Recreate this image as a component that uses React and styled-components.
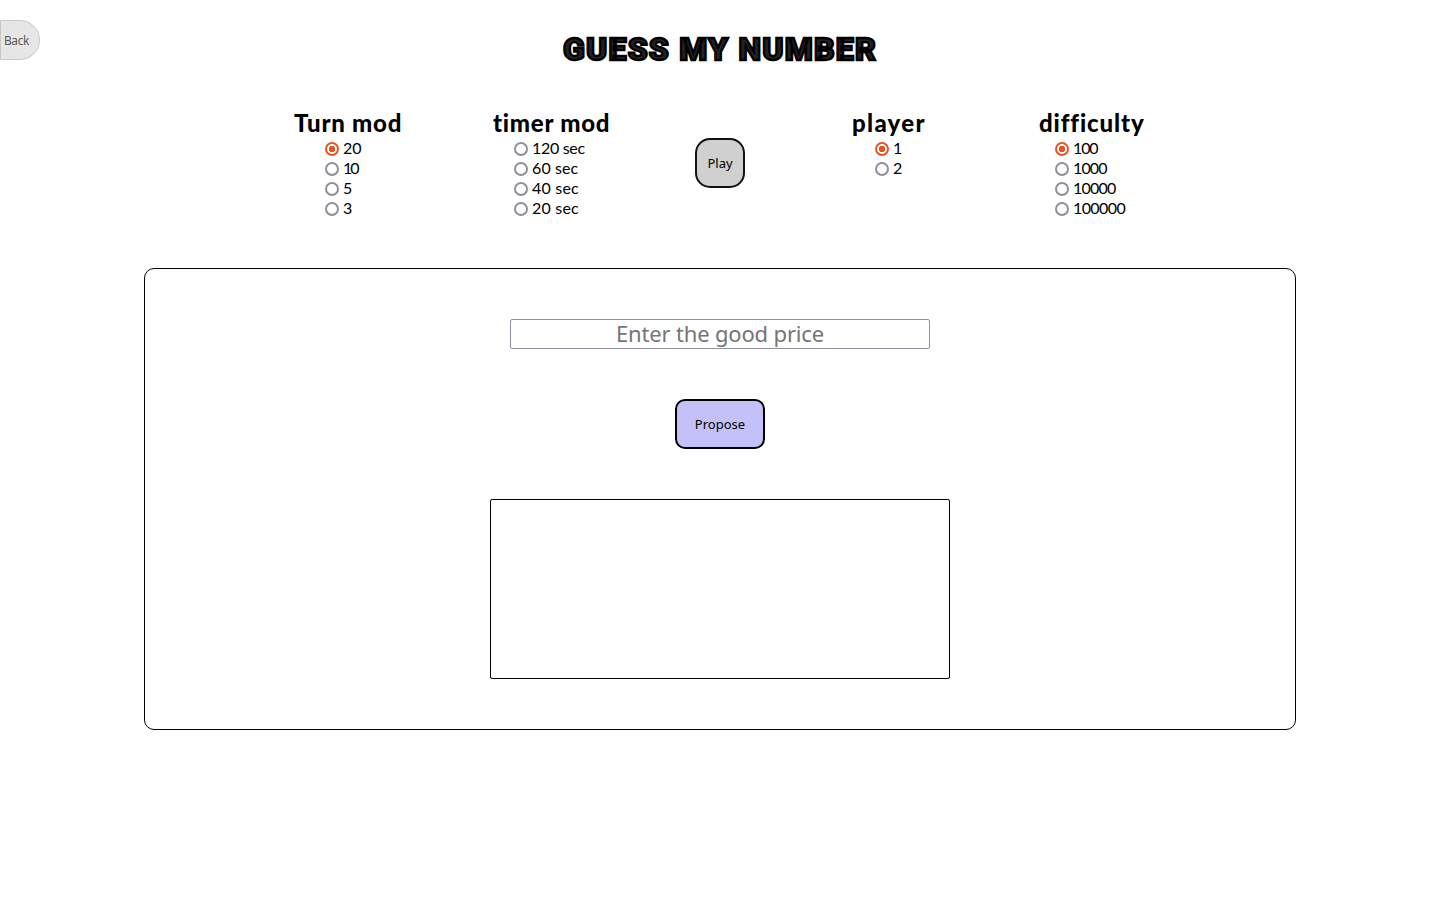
import React from "react";
import styled, { createGlobalStyle } from "styled-components";

const GlobalStyle = createGlobalStyle`
  * {
    box-sizing: border-box;
  }
  body {
    margin: 0;
    background: #fff;
    color: #000;
    font-family: Lato, sans-serif;
    font-variant-ligatures: none;
  }
`;

const Page = styled.div`
  min-height: 900px;
  padding-top: 20px;
`;

const Header = styled.header`
  display: grid;
  grid-template-columns: 40px 1fr 40px;
  align-items: start;
  height: 88px;
`;

const BackButton = styled.button`
  width: 40px;
  height: 40px;
  padding: 0 7px 0 0;
  border: 1px solid #c8c8c8;
  border-radius: 0 20px 20px 0;
  background: #e6e6e6;
  color: #595959;
  font: 400 12px "Noto Sans", sans-serif;
  letter-spacing: -0.4px;
`;

const Title = styled.h1`
  margin: 9px 0 0;
  text-align: center;
  font: 900 32px/40px Roboto, sans-serif;
  letter-spacing: 1.2px;
  color: #222;
  -webkit-text-stroke: 2.3px #000;
`;

const Settings = styled.section`
  display: grid;
  grid-template-columns: 199px 202px 157px 187px 110px;
  align-items: start;
  height: 160px;
  padding-left: 294px;
`;

const GroupTitle = styled.h2`
  margin: 0;
  height: 31px;
  font-size: 24px;
  font-weight: 900;
  line-height: 30px;
  letter-spacing: ${(p) => p.$spacing}px;
  white-space: nowrap;
`;

const Options = styled.div`
  display: flex;
  flex-direction: column;
  padding-left: ${(p) => p.$indent}px;
`;

const Option = styled.label`
  display: flex;
  align-items: center;
  gap: 4px;
  height: 20px;
  font-size: 16px;
  letter-spacing: ${(p) => p.$spacing}px;
  white-space: nowrap;
`;

const OptionText = styled.span`
  line-height: 18px;
  padding-bottom: 2px;
`;

const Radio = styled.input`
  appearance: none;
  flex: none;
  width: 14px;
  height: 14px;
  margin: 0;
  border: 2px solid #8f8f9d;
  border-radius: 50%;
  background: #fff;

  &:checked {
    border-color: #e95420;
    background: radial-gradient(circle, #e95420 2.9px, #fff 3.5px);
  }
`;

const PlayButton = styled.button`
  width: 50px;
  height: 50px;
  margin-top: 30px;
  padding: 0;
  border: 2px solid #111;
  border-radius: 15px;
  background: #d0d0d0;
  color: #000;
  font: 400 13px "Noto Sans", sans-serif;
`;

const Board = styled.main`
  display: flex;
  flex-direction: column;
  align-items: center;
  gap: 50px;
  width: 1152px;
  height: 462px;
  margin: 0 auto;
  padding-top: 50px;
  border: 1px solid #000;
  border-radius: 10px;
`;

const PriceInput = styled.input`
  width: 420px;
  height: 30px;
  padding: 0 0 2px;
  border: 1px solid #8f8f9d;
  border-radius: 2px;
  text-align: center;
  font: 400 22px "Noto Sans", sans-serif;
  letter-spacing: -0.17px;

  &::placeholder {
    color: #757575;
    opacity: 1;
  }
`;

const ProposeButton = styled.button`
  width: 90px;
  height: 50px;
  padding: 0;
  border: 2px solid #000;
  border-radius: 10px;
  background: #c3c1f8;
  color: #000;
  font: 400 13px "Noto Sans", sans-serif;
`;

const History = styled.div`
  width: 460px;
  height: 180px;
  border: 1px solid #000;
  border-radius: 2px;
`;

function Group({ title, spacing, indent, name, options, checked }) {
  return (
    <div>
      <GroupTitle $spacing={spacing}>{title}</GroupTitle>
      <Options $indent={indent}>
        {options.map(([label, tracking]) => (
          <Option key={label} $spacing={tracking}>
            <Radio type="radio" name={name} defaultChecked={label === checked} />
            <OptionText>{label}</OptionText>
          </Option>
        ))}
      </Options>
    </div>
  );
}

export default function App() {
  return (
    <Page>
      <GlobalStyle />
      <Header>
        <BackButton>Back</BackButton>
        <Title>GUESS MY NUMBER</Title>
      </Header>
      <Settings>
        <Group
          title="Turn mod" spacing={0.75} indent={31} name="turn" checked="20"
          options={[["20", 0], ["10", -2], ["5", 0], ["3", 0]]}
        />
        <Group
          title="timer mod" spacing={0.75} indent={21} name="timer"
          options={[["120 sec", -0.3], ["60 sec", 0.1], ["40 sec", 0.2], ["20 sec", 0.2]]}
        />
        <PlayButton>Play</PlayButton>
        <Group
          title="player" spacing={1.3} indent={23} name="player" checked="1"
          options={[["1", 0], ["2", 0]]}
        />
        <Group
          title="difficulty" spacing={0.9} indent={16} name="difficulty" checked="100"
          options={[["100", -1.1], ["1000", -0.9], ["10000", -0.75], ["100000", -0.6]]}
        />
      </Settings>
      <Board>
        <PriceInput placeholder="Enter the good price" />
        <ProposeButton>Propose</ProposeButton>
        <History />
      </Board>
    </Page>
  );
}
